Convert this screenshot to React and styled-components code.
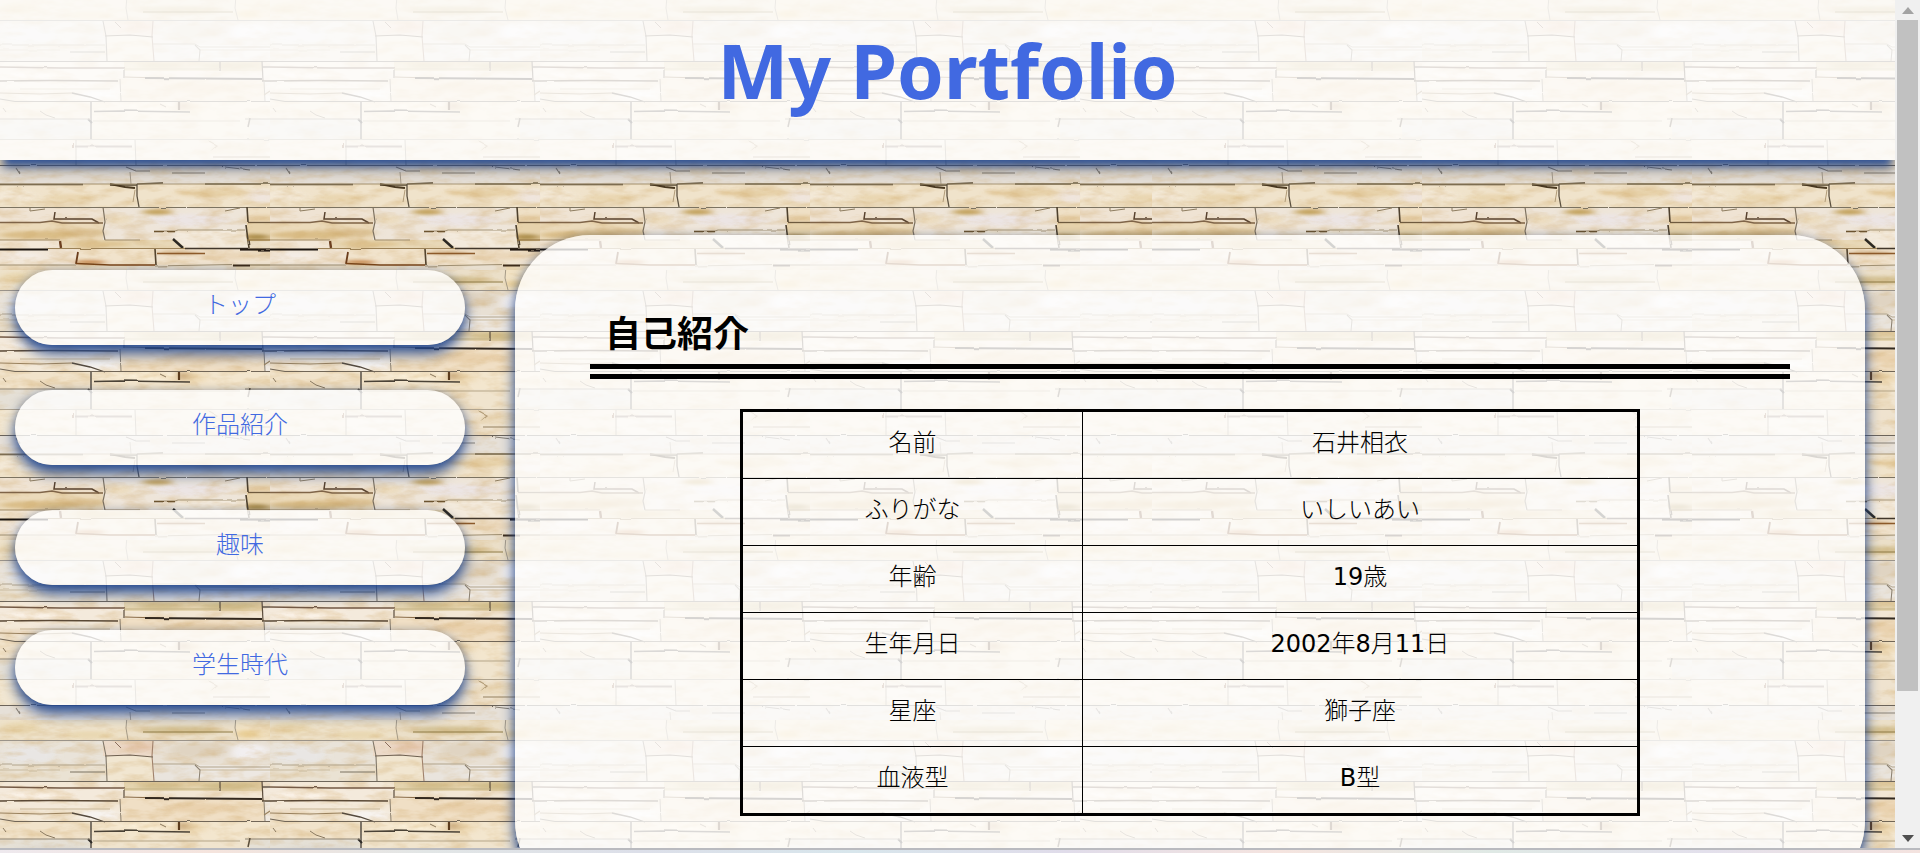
import React from "react";
import styled, { createGlobalStyle } from "styled-components";

/* ---------- stone wall artwork, used as the page background ---------- */

// x, y, width, height, fill
const STONES = [
  [0, 0, 127, 20, "#eee2ca"], [127, 0, 109, 20, "#ebdfc8"], [236, 0, 34, 20, "#f1e2c4"],
  [0, 20, 106, 25, "#e9e3d9"], [0, 45, 106, 16, "#eae2d3"], [103, 21, 50, 15, "#ecdac9"],
  [106, 36, 47, 25, "#f1e6d1"], [153, 20, 117, 25, "#e8e0d4"], [153, 44, 45, 17, "#e9e4dd"],
  [198, 45, 72, 16, "#ede8e2"], [0, 61, 270, 7, "#f3e8d7"], [124, 61, 138, 10, "#e4d4b0"],
  [0, 68, 124, 13, "#f4eadc"], [124, 71, 138, 8, "#f3e7d5"], [262, 61, 8, 20, "#f3e9dc"],
  [0, 81, 120, 20, "#f3e9d9"], [120, 79, 144, 22, "#f0dfc5"], [264, 81, 6, 20, "#f0e9e0"],
  [0, 101, 91, 18, "#f1e3cb"], [91, 101, 179, 18, "#f3e6ce"], [0, 119, 91, 21, "#e5e0d6"],
  [91, 119, 159, 21, "#f0e4ce"], [250, 119, 20, 21, "#e5e0d6"], [0, 140, 76, 25, "#f2e7d2"],
  [76, 140, 59, 25, "#f2eada"], [135, 140, 135, 25, "#efe3cf"], [0, 165, 270, 19, "#e6e0d8"],
  [0, 184, 137, 23, "#f0e3cb"], [137, 184, 133, 23, "#f0e3cb"], [0, 207, 103, 15, "#efe3d3"],
  [0, 222, 103, 18, "#ebdabb"], [103, 207, 144, 33, "#eee5d9"], [247, 207, 23, 16, "#efe0c6"],
  [247, 223, 23, 18, "#e6d2ab"], [0, 240, 60, 9, "#f3e8d8"], [60, 240, 125, 9, "#e8d8b7"],
  [0, 249, 78, 16, "#f1e6d7"], [78, 249, 77, 16, "#f1e3cc"], [155, 249, 115, 16, "#f0e3cf"],
  [0, 265, 127, 5, "#ebddc5"], [127, 265, 109, 5, "#e8dfd0"], [236, 265, 34, 5, "#eedfc2"],
];

// centre x, centre y, radius x, radius y, fill, opacity
const STAINS = [
  [180, 10, 40, 4, "#b59a52", 0.4], [20, 8, 20, 6, "#dcba70", 0.25], [90, 15, 25, 4, "#dcba70", 0.25],
  [248, 14, 12, 4, "#dcae50", 0.4], [30, 35, 26, 8, "#e9e7e5", 0.9], [200, 30, 30, 8, "#cdbb98", 0.3],
  [250, 32, 20, 8, "#f3f1f3", 0.9], [140, 27, 16, 5, "#dba98b", 0.3], [160, 66, 22, 4, "#b59c55", 0.35],
  [230, 66, 28, 4, "#b59c55", 0.4], [40, 75, 34, 3, "#fdf4ea", 0.8], [200, 88, 34, 5, "#d9b47c", 0.3],
  [100, 95, 20, 5, "#f7f4f2", 0.9], [20, 92, 20, 3, "#d6b582", 0.25], [150, 106, 30, 4, "#fbefd9", 0.9],
  [50, 130, 36, 5, "#d5d0c8", 0.4], [190, 108, 16, 6, "#dcb56d", 0.25], [230, 150, 30, 5, "#e1c48c", 0.25],
  [70, 198, 24, 4, "#dbb878", 0.3], [212, 193, 36, 4, "#d8b26c", 0.35], [15, 196, 20, 6, "#f4ead9", 0.9],
  [262, 196, 14, 7, "#efe6df", 0.9], [157, 212, 15, 3, "#b38a30", 0.7], [190, 220, 40, 6, "#ece5e5", 0.9],
  [120, 220, 12, 5, "#e9cf9c", 0.4], [40, 235, 40, 4, "#c69b4c", 0.45], [85, 233, 22, 4, "#ba8f45", 0.3],
  [256, 237, 14, 3, "#8f6b1d", 0.65], [262, 218, 18, 3, "#cfa763", 0.35], [100, 244, 30, 3, "#d2ad68", 0.45],
  [90, 262, 16, 2, "#b5651d", 0.7], [180, 253, 20, 2, "#a66d2c", 0.4], [230, 256, 30, 4, "#e0c091", 0.35],
  [20, 256, 22, 4, "#f4ede7", 0.9], [183, 106, 4, 4, "#9b6d35", 0.6],
];

// path, colour, stroke width
const CRACKS = [
  ["M0 20.5H270", "#9b948a", 1], ["M127 -4L126 8L128 20", "#a59a86", 1], ["M236 -4L235 8L238 20", "#a59a86", 1],
  ["M143 12H233", "#8d7a45", 1.2], ["M103 21L106 36L107 61", "#7f7668", 1.1], ["M153 21L152 36L154 61", "#a0826c", 1.1],
  ["M105 36L130 35L153 37", "#6e6050", 1.1], ["M115 22L121 28", "#8b6d5c", 1], ["M0 45H105M153 44H195L200 47H270", "#b1a48c", 1],
  ["M70 52H105", "#7b7263", 1.1], ["M0 50H60M200 50H270", "#cabb9f", 1], ["M195 45L200 50L199 61", "#8e8474", 1.1],
  ["M0 61.5H270", "#6e665b", 1.2], ["M0 67L60 68L125 68", "#745a45", 1.3], ["M262 67H270", "#4c4035", 1.3],
  ["M124 69V78M262 61L263 81M220 62V71", "#5b4c3c", 1.2], ["M124 69H220", "#c4b284", 1], ["M125 77L160 78", "#8a6c48", 1.2],
  ["M145 78L262 79", "#33291f", 1.8], ["M0 81L50 80.500L118 81M262 81H270", "#5a4936", 1.3],
  ["M120 79L121 101M264 81L265 101", "#8a7f6e", 1], ["M0 93L40 94L72 93M270 91L264 95", "#9a825e", 1.1],
  ["M20 89H110", "#c8b695", 1], ["M72 93L90 97L105 102", "#554a3d", 1.3], ["M0 99L15 101.500H270", "#716657", 1.2],
  ["M91 102V140", "#3f3a34", 1.3], ["M88 119L92 123", "#2e2a26", 2], ["M94 111.500L120 111L190 112", "#4b4337", 1.5],
  ["M179 102V110", "#5c3c1e", 2.2], ["M3 108L6 112M40 111L46 115L55 118M160 104L166 107M272 108L276 112", "#8a795f", 1],
  ["M0 119H91M245 119H270", "#8f8574", 1], ["M93 121H240", "#b5a587", 1], ["M250 118L248 127", "#5a4d3a", 1.5],
  ["M0 139.500H270", "#b0a48f", 1], ["M76 140V165M135 140L136 165", "#9a8f7d", 1], ["M73 143V148", "#8f6b4b", 2],
  ["M75 146.500H132", "#8e7968", 1.8], ["M208 141L217 146L211 151", "#b39d78", 1.2], ["M213 157H270", "#94805f", 1.2],
  ["M0 165.500H270", "#6c645a", 1.2], ["M16 168L20 174M126 167L136 171H150M172 173H205M225 167L250 170M286 168L290 174", "#867e73", 1.1],
  ["M130 172L131 184", "#a69c8d", 1], ["M0 184.500H83M110 185H137M137 184L163 183M205 184H270", "#54462f", 1.6],
  ["M110 184L125 187L135 188", "#493820", 2], ["M0 184H270", "#a79574", 1], ["M137 184V196L139 207", "#5c5140", 1.3],
  ["M135 190L133 202", "#b09b78", 1], ["M0 207.500H270", "#7c7361", 1.1], ["M30 208V211L45 209M240 208L225 211", "#8e7d60", 1],
  ["M55 212L54 219L92 219L99 223", "#59432f", 1.5], ["M0 222.500H40L52 221L62 223H103", "#7f6448", 1.3],
  ["M103 207L105 222L103 231L105 240", "#7e7260", 1.2], ["M105 240H140", "#a08c6a", 1],
  ["M247 207L248 222M246 225L249 248", "#4e412e", 1.6],
  ["M248 222.500H270", "#6e5a3e", 1.3], ["M0 240H60", "#a08a65", 1], ["M154 231.500H175", "#6c5430", 1.6],
  ["M175 231L178 230H245", "#a8977a", 1.1],
  ["M173 239L183 248", "#2b2822", 2.4], ["M60 241L61 248", "#6c4020", 2.4], ["M247 240H270", "#92723c", 1.2],
  ["M0 249.500H48", "#1d1610", 2.2], ["M48 248.500H185", "#9c8257", 1.1], ["M185 248.500H248", "#40362a", 1.5],
  ["M240 249.500H270", "#241a12", 2.2], ["M155 249L156 265", "#55452f", 1.6], ["M78 252L76 264", "#6b3d1c", 1.8],
  ["M76 263.500L110 265H155", "#7b4618", 1.6], ["M157 253.500H205", "#8c5a2a", 1.4],
  ["M0 265H76M155 266L232 264.500", "#a09073", 1.1], ["M233 265.500H250", "#3d2b19", 2], ["M250 265H270", "#8e7a58", 1.2],
];

const WALL_SVG = `<svg xmlns="http://www.w3.org/2000/svg" width="1152" height="720">
<defs>
<filter id="rough" x="-5%" y="-5%" width="110%" height="110%" color-interpolation-filters="sRGB">
<feTurbulence type="fractalNoise" baseFrequency="0.05" numOctaves="2" seed="4"/>
<feDisplacementMap in="SourceGraphic" scale="2" xChannelSelector="R" yChannelSelector="G" result="bent"/>
<feGaussianBlur in="bent" stdDeviation="0.4"/>
</filter>
<filter id="soft" x="-50%" y="-100%" width="200%" height="300%" color-interpolation-filters="sRGB">
<feGaussianBlur stdDeviation="5 1.8"/>
</filter>
<filter id="grain" x="0" y="0" width="100%" height="100%" color-interpolation-filters="sRGB">
<feTurbulence type="fractalNoise" baseFrequency="0.04 0.12" numOctaves="4" seed="9"/>
<feColorMatrix values="0 0 0 0 0.8  0 0 0 0 0.64  0 0 0 0 0.38  0.8 0 0 0 -0.33"/>
</filter>
<pattern id="stones" width="270" height="270" patternUnits="userSpaceOnUse">
${STONES.map(([x, y, w, h, c]) => `<rect x="${x}" y="${y}" width="${w}" height="${h}" fill="${c}"/>`).join("")}
<g filter="url(#soft)">${STAINS.map(([x, y, rx, ry, c, o]) => `<ellipse cx="${x}" cy="${y}" rx="${rx}" ry="${ry}" fill="${c}" opacity="${o}"/>`).join("")}</g>
<path d="M178 230L245 231L248 248H185L175 238Z" fill="#f3eadc"/>
<rect width="270" height="270" filter="url(#grain)"/>
<g fill="none" filter="url(#rough)">${CRACKS.map(([d, c, w]) => `<path d="${d}" stroke="${c}" stroke-width="${w}"/>`).join("")}</g>
</pattern>
</defs>
<rect width="1152" height="720" fill="url(#stones)"/>
</svg>`;

const wallImage = `url("data:image/svg+xml,${encodeURIComponent(WALL_SVG)}")`;

/* ---------- styles ---------- */

const PAPER = "rgba(255, 255, 255, 0.8)";

const GlobalStyle = createGlobalStyle`
  *, *::before, *::after { box-sizing: border-box; }
  body {
    margin: 0;
    font-family: "Noto Sans", "Noto Sans CJK JP", sans-serif;
    font-size: 24px;
    color: #000;
  }
`;

const Window = styled.div`
  display: flex;
  flex-direction: column;
  height: 100vh;
`;

const Pane = styled.div`
  display: flex;
  flex: 1;
  min-height: 0;
`;

const Page = styled.div`
  flex: 1;
  overflow: hidden;
  background-color: #ecdfc9;
  background-image: ${wallImage};
`;

const Header = styled.header`
  height: 160px;
  background: ${PAPER};
  box-shadow: 0 10px 8px -4px rgba(44, 80, 150, 0.95), 0 8px 15px rgba(0, 0, 0, 0.35);
  text-align: center;
`;

const Title = styled.h1`
  margin: 0;
  font-size: 75px;
  line-height: 140px;
  color: royalblue;
`;

const Columns = styled.div`
  display: grid;
  grid-template-columns: 450px 1fr;
  gap: 50px;
  align-items: start;
  padding: 75px 30px 75px 15px;
`;

const Menu = styled.nav`
  display: flex;
  flex-direction: column;
  gap: 45px;
  padding-top: 35px;
`;

const MenuLink = styled.a`
  height: 75px;
  border-radius: 38px;
  background: ${PAPER};
  box-shadow: 0 8px 14px rgba(34, 72, 145, 1), 0 0 8px rgba(0, 0, 0, 0.15);
  font-family: "Noto Sans CJK JP", sans-serif;
  font-weight: 300;
  line-height: 66px;
  text-align: center;
  text-decoration: none;
  color: royalblue;
`;

const Article = styled.main`
  padding: 75px 75px 80px;
  border-radius: 75px;
  background: ${PAPER};
  box-shadow: 0 8px 14px rgba(34, 72, 145, 1), 0 0 8px rgba(0, 0, 0, 0.15);
`;

const SectionTitle = styled.h2`
  margin: 0 0 30px;
  padding: 0 15px 6px;
  border-bottom: 15px double #000;
  font-size: 36px;
  line-height: 48px;
`;

const Profile = styled.table`
  width: 75%;
  margin: 0 auto;
  border: 3px solid #000;
  border-collapse: collapse;
  table-layout: fixed;
  text-align: center;
`;

const Cell = styled.td`
  width: ${(p) => p.$width};
  height: 66px;
  padding: 0 0 4px;
  border: 1px solid #000;
  font-family: "DejaVu Sans", "Noto Sans CJK JP Light", "Noto Sans CJK JP", sans-serif;
  font-weight: 400;
  line-height: 62px;
`;

const ScrollTrack = styled.div`
  display: flex;
  flex-direction: column;
  width: 25px;
  padding: 0 2px;
  background: #f0f0f0;
`;

const ScrollButton = styled.button`
  display: flex;
  align-items: center;
  justify-content: center;
  height: 20px;
  padding: 0;
  border: 0;
  background: none;
  color: ${(p) => p.$color};
`;

const ScrollRail = styled.div`
  flex: 1;
`;

const ScrollThumb = styled.div`
  height: 83%;
  background: #c1c1c1;
`;

const WindowEdge = styled.div`
  height: 5px;
  border-top: 2px solid #b9babf;
  background: linear-gradient(90deg, #eee9ee, #f5e4dd, #e2e6e6, #dcdfe9, #d8e6ec, #e0dcea, #f5e4df, #dfe9e5, #e3e0ec, #f4e3df);
`;

/* ---------- content ---------- */

const MENU = ["トップ", "作品紹介", "趣味", "学生時代"];

const PROFILE = [
  ["名前", "石井相衣"],
  ["ふりがな", "いしいあい"],
  ["年齢", "19歳"],
  ["生年月日", "2002年8月11日"],
  ["星座", "獅子座"],
  ["血液型", "B型"],
];

export default function App() {
  return (
    <Window>
      <GlobalStyle />
      <Pane>
        <Page lang="ja">
          <Header>
            <Title>My Portfolio</Title>
          </Header>
          <Columns>
            <Menu>
              {MENU.map((label) => (
                <MenuLink key={label} href="#">{label}</MenuLink>
              ))}
            </Menu>
            <Article>
              <SectionTitle>自己紹介</SectionTitle>
              <Profile>
                <tbody>
                  {PROFILE.map(([name, value]) => (
                    <tr key={name}>
                      <Cell as="th" scope="row" $width="38%">{name}</Cell>
                      <Cell $width="62%">{value}</Cell>
                    </tr>
                  ))}
                </tbody>
              </Profile>
            </Article>
          </Columns>
        </Page>
        <ScrollTrack>
          <ScrollButton type="button" aria-label="上へスクロール" $color="#a3a3a3">
            <svg width="12" height="7" viewBox="0 0 12 7"><path d="M6 0L12 7H0Z" fill="currentColor" /></svg>
          </ScrollButton>
          <ScrollRail>
            <ScrollThumb />
          </ScrollRail>
          <ScrollButton type="button" aria-label="下へスクロール" $color="#505050">
            <svg width="12" height="7" viewBox="0 0 12 7"><path d="M6 7L12 0H0Z" fill="currentColor" /></svg>
          </ScrollButton>
        </ScrollTrack>
      </Pane>
      <WindowEdge />
    </Window>
  );
}
